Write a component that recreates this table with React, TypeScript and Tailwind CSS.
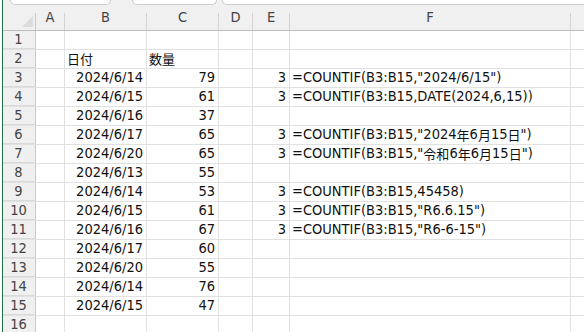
import React from 'react';

const cols = [
  { key: 'A', w: 'w-[29px]' },
  { key: 'B', w: 'w-[82px]' },
  { key: 'C', w: 'w-[72px]' },
  { key: 'D', w: 'w-[34px]' },
  { key: 'E', w: 'w-[37px]' },
  { key: 'F', w: 'w-[281px]' },
];

type Row = { b?: string; c?: string; e?: string; f?: string; head?: boolean };

const rows: Row[] = [
  {},
  { b: '日付', c: '数量', head: true },
  { b: '2024/6/14', c: '79', e: '3', f: '=COUNTIF(B3:B15,"2024/6/15")' },
  { b: '2024/6/15', c: '61', e: '3', f: '=COUNTIF(B3:B15,DATE(2024,6,15))' },
  { b: '2024/6/16', c: '37' },
  { b: '2024/6/17', c: '65', e: '3', f: '=COUNTIF(B3:B15,"2024年6月15日")' },
  { b: '2024/6/20', c: '65', e: '3', f: '=COUNTIF(B3:B15,"令和6年6月15日")' },
  { b: '2024/6/13', c: '55' },
  { b: '2024/6/14', c: '53', e: '3', f: '=COUNTIF(B3:B15,45458)' },
  { b: '2024/6/15', c: '61', e: '3', f: '=COUNTIF(B3:B15,"R6.6.15")' },
  { b: '2024/6/16', c: '67', e: '3', f: '=COUNTIF(B3:B15,"R6-6-15")' },
  { b: '2024/6/17', c: '60' },
  { b: '2024/6/20', c: '55' },
  { b: '2024/6/14', c: '76' },
  { b: '2024/6/15', c: '47' },
  {},
];

// CJK glyphs in the sheet are narrower than Noto's, so shrink them a bit
const renderText = (text?: string) => {
  if (!text) return null;
  return text.split(/([\u3000-\u9fff]+)/).map((part, i) =>
    /[\u3000-\u9fff]/.test(part) ? (
      <span key={i} className="text-[13px] font-['Noto_Sans_CJK_JP',sans-serif]">
        {part}
      </span>
    ) : (
      part
    )
  );
};

const HeadCell = ({ w, label }: { w: string; label: string }) => (
  <div className={`${w} flex shrink-0 h-full`}>
    <div className="flex-1 flex items-center justify-center pt-[1px] text-[#444]">{label}</div>
    <div className="w-px mt-[8px] bg-[#d4d4d4]" />
  </div>
);

const Cell = ({ w, text, align }: { w: string; text?: string; align: 'l' | 'r' }) => (
  <div
    className={`${w} shrink-0 h-full border-r border-[#e1e1e1] flex items-center overflow-visible whitespace-nowrap ${
      align === 'r' ? 'justify-end pr-[3px]' : 'justify-start pl-[2px]'
    }`}
  >
    {renderText(text)}
  </div>
);

export default function App() {
  return (
    <div className="w-[584px] h-[332px] overflow-hidden bg-white flex font-['DejaVu_Sans_Condensed','DejaVu_Sans','Noto_Sans_CJK_JP',sans-serif] text-[14.5px] text-[#111]">
      {/* window edge */}
      <div className="w-[2px] shrink-0 bg-white" />
      <div className="w-px shrink-0 bg-[#217346]" />

      <div className="flex-1 flex flex-col min-w-0">
        {/* sheet tabs strip */}
        <div className="h-[5px] shrink-0 flex bg-[#f0f0f0]">
          <div className="ml-[7px] w-[101px] h-[5px] bg-white border border-t-0 border-[#cdcdcd] rounded-b-[6px]" />
          <div className="ml-[21px] w-[85px] h-[5px] bg-white border border-t-0 border-[#cdcdcd] rounded-b-[6px]" />
          <div className="ml-[5px] flex-1 h-[5px] bg-white border border-t-0 border-r-0 border-[#cdcdcd] rounded-bl-[6px]" />
        </div>

        {/* column headers */}
        <div className="h-[26px] shrink-0 flex bg-[#f0f0f0] border-b border-[#bdbdbd]">
          <div className="w-[33px] shrink-0 flex h-full">
            <div className="flex-1 flex items-end justify-end pb-[3px] pr-[2px]">
              <svg width="11" height="11" viewBox="0 0 11 11">
                <polygon points="11,0 11,11 0,11" fill="#dcdcdc" />
              </svg>
            </div>
            <div className="w-px mt-[8px] bg-[#c8c8c8]" />
          </div>
          {cols.map((c) => (
            <HeadCell key={c.key} w={c.w} label={c.key} />
          ))}
          <div className="flex-1" />
        </div>

        {/* rows */}
        {rows.map((r, i) => (
          <div key={i} className="h-[19px] shrink-0 flex border-b border-[#e1e1e1]">
            <div className="w-[33px] shrink-0 h-full bg-[#f0f0f0] border-r border-[#c8c8c8] flex items-center justify-center pr-[1px] text-[#444] -mb-px border-b border-b-[#dadada]">
              {i + 1}
            </div>
            <Cell w="w-[29px]" align="l" />
            <Cell w="w-[82px]" text={r.b} align={r.head ? 'l' : 'r'} />
            <Cell w="w-[72px]" text={r.c} align={r.head ? 'l' : 'r'} />
            <Cell w="w-[34px]" align="r" />
            <Cell w="w-[37px]" text={r.e} align="r" />
            <Cell w="w-[281px]" text={r.f} align="l" />
            <div className="flex-1" />
          </div>
        ))}
      </div>
    </div>
  );
}
